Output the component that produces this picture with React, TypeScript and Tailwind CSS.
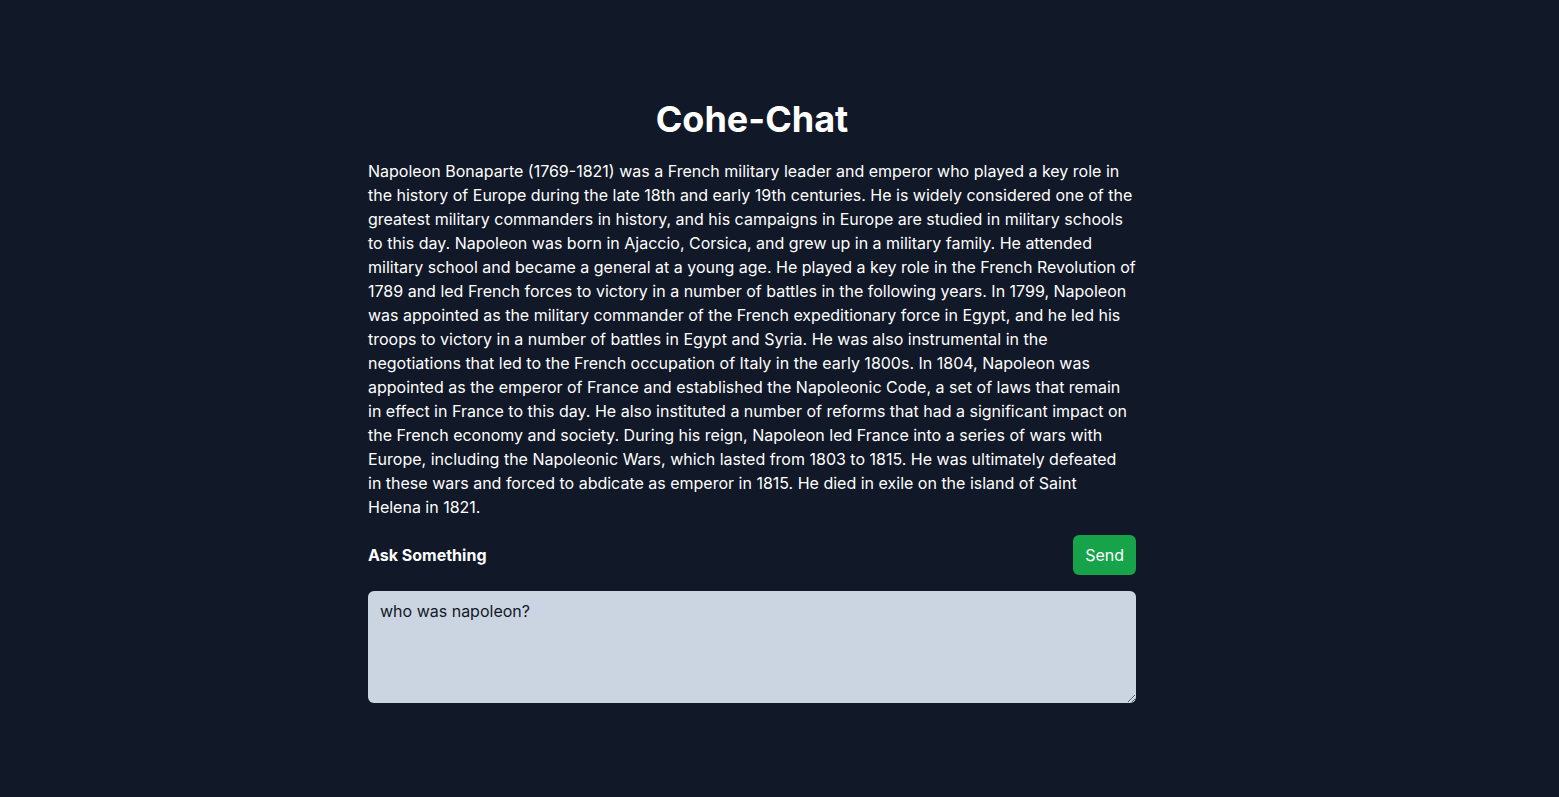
import { useState } from "react";

const answerStart =
  "Napoleon Bonaparte (1769-1821) was a French military leader and emperor who played a key role in the history of Europe during the late 18th and early 19th centuries. He is widely considered one of the greatest military commanders in history, and his campaigns in Europe are studied in military schools to this day. Napoleon was born in Ajaccio, Corsica, and grew up in a military family. He attended military school and became a general at a young age. He played a key role in the French Revolution of 1789 and led French forces to victory in a number of battles in the following years. In 1799, Napoleon was appointed as the military commander of the French expeditionary force in Egypt, and he led his troops to victory in a number of battles in Egypt and Syria. He was also instrumental in the negotiations that led to the French occupation of Italy in the early 1800s. In 1804, Napoleon was appointed as the emperor of France and established the Napoleonic Code, a set of laws that remain in effect in France to this day. He also instituted a number of reforms that had a significant impact on the French economy and society. During his reign, Napoleon led France into a series of wars with Europe, including the Napoleonic Wars, which lasted from 1803 to 1815. He was ultimately defeated ";
const answerMid =
  " wars and forced to abdicate as emperor in 1815. He died in exile on the island of Saint ";

export default function App() {
  const [question, setQuestion] = useState("who was napoleon?");

  return (
    <div className="min-h-screen bg-[#111827] text-white font-['Inter',sans-serif] pr-[55px]">
      <div className="max-w-3xl mx-auto pt-[99px] pb-24">
        <h1 className="text-4xl font-bold text-center mb-5">Cohe-Chat</h1>

        <p className="text-base leading-6">
          {answerStart}
          <span className="whitespace-nowrap">in these</span>
          {answerMid}
          <span className="whitespace-nowrap">Helena in</span> 1821.
        </p>

        <div className="flex items-center justify-between mt-4">
          <label htmlFor="question" className="font-bold">
            Ask Something
          </label>
          <button className="bg-[#16a34a] hover:bg-green-700 text-white rounded-md px-3 py-2 leading-6">
            Send
          </button>
        </div>

        <textarea
          id="question"
          rows={4}
          value={question}
          onChange={(e) => setQuestion(e.target.value)}
          className="block w-full mt-4 bg-[#cbd5e1] text-[#111827] rounded-md px-3 py-2 leading-6 outline-none"
        />
      </div>
    </div>
  );
}
